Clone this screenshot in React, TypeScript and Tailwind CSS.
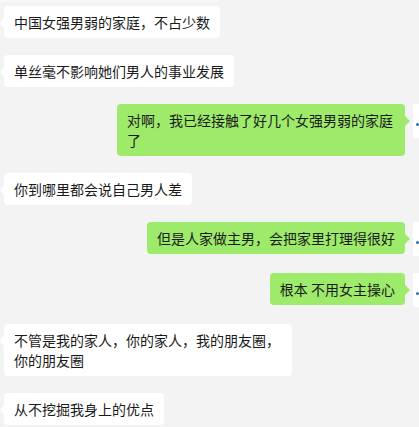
import React from 'react';

// One chat message: side decides colour, tail direction and alignment
interface Msg {
  text: string;
  mine?: boolean;
}

const messages: Msg[] = [
  { text: '中国女强男弱的家庭，不占少数' },
  { text: '单丝毫不影响她们男人的事业发展' },
  { text: '对啊，我已经接触了好几个女强男弱的家庭了', mine: true },
  { text: '你到哪里都会说自己男人差' },
  { text: '但是人家做主男，会把家里打理得很好', mine: true },
  { text: '根本 不用女主操心', mine: true },
  { text: '不管是我的家人，你的家人，我的朋友圈，你的朋友圈' },
  { text: '从不挖掘我身上的优点' },
];

const Bubble: React.FC<Msg> = ({ text, mine }) => {
  if (mine) {
    return (
      <div className="flex justify-end items-start">
        <div className="relative max-w-[288px] rounded-[4px] bg-[#9eea6a] px-[10px] py-[6px] text-[14px] leading-[20px] text-[#1a1a1a]">
          {text}
          {/* tail pointing right */}
          <div className="absolute right-[-5px] top-[12px] w-0 h-0 border-y-[5px] border-y-transparent border-l-[5px] border-l-[#9eea6a]" />
        </div>
        {/* avatar, mostly cut off by the window edge */}
        <div className="relative ml-[8px] h-[34px] w-[6px] shrink-0 bg-white">
          <div className="absolute left-[3px] top-[19px] h-[3px] w-[3px] rounded-full bg-[#2c6fa8]" />
        </div>
      </div>
    );
  }
  return (
    <div className="flex justify-start pl-[4px]">
      <div className="relative max-w-[288px] rounded-[4px] bg-white px-[10px] py-[6px] text-[14px] leading-[20px] text-[#1a1a1a]">
        {text}
        {/* tail pointing left */}
        <div className="absolute left-[-4px] top-[12px] w-0 h-0 border-y-[5px] border-y-transparent border-r-[4px] border-r-white" />
      </div>
    </div>
  );
};

export default function App() {
  return (
    <div
      className="w-[419px] h-[427px] overflow-hidden bg-[#f3f3f3]"
      style={{ fontFamily: '"Noto Sans CJK SC", "Noto Sans", sans-serif' }}
    >
      <div className="h-[2px] w-[219px] bg-[#f8f8f8]" />
      <div className="flex flex-col gap-[17px] pt-[4px]">
        {messages.map((m, i) => (
          <Bubble key={i} text={m.text} mine={m.mine} />
        ))}
      </div>
    </div>
  );
}
